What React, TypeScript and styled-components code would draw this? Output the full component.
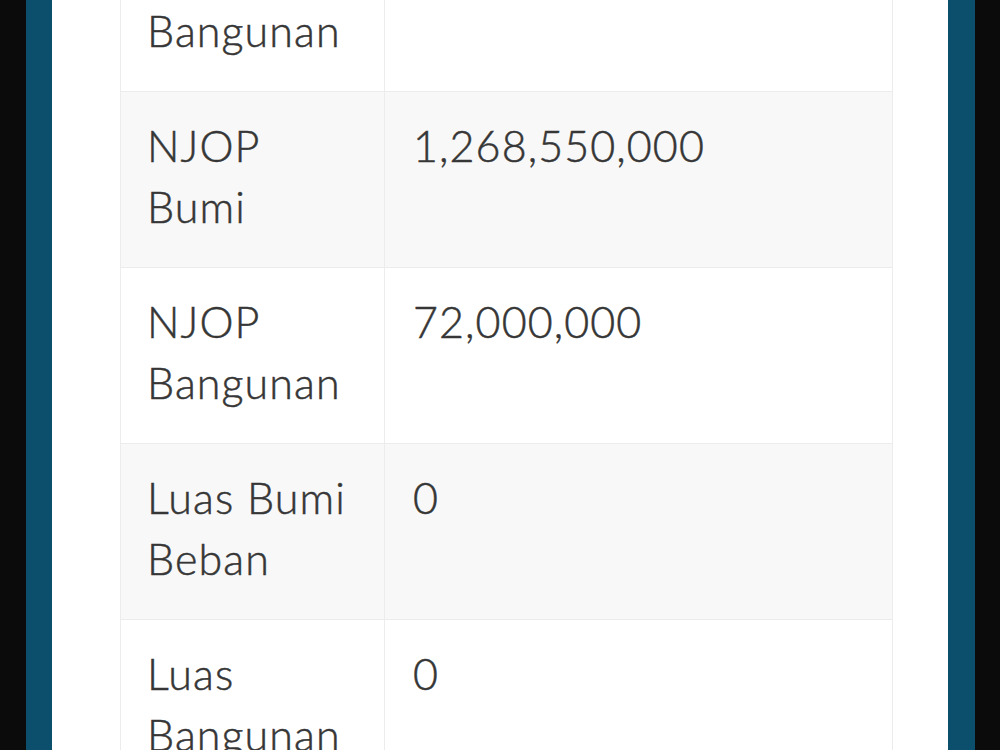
import React from "react";
import styled, { createGlobalStyle } from "styled-components";

const Global = createGlobalStyle`
  html, body { margin: 0; padding: 0; background: #0b0b0b; }
  #root { width: 1000px; height: 750px; }
`;

const Screen = styled.div`
  width: 1000px;
  height: 750px;
  box-sizing: border-box;
  background: #0b0b0b;
  padding: 0 25px 0 26px;
  overflow: hidden;
`;

const Device = styled.div`
  height: 100%;
  box-sizing: border-box;
  border-left: 26px solid #0b4f6d;
  border-right: 27px solid #0b4f6d;
  background: #ffffff;
  padding: 0 55px 0 68px;
  overflow: hidden;
`;

const Table = styled.table`
  width: 100%;
  margin-top: -85px;
  border-collapse: collapse;
  border: 1px solid #ececec;
  font-family: Lato, "Open Sans", sans-serif;
  font-weight: 300;
  font-size: 43px;
  line-height: 61px;
  letter-spacing: 1.1px;
  color: #363636;
  -webkit-text-stroke: 0.5px #363636;
`;

const Row = styled.tr<{ $striped: boolean }>`
  background: ${(p) => (p.$striped ? "#f8f8f8" : "#ffffff")};
  border-top: 1px solid #ececec;
`;

const Label = styled.td`
  width: 210px;
  padding: 23px 27px 30px 26px;
  vertical-align: top;
  border-right: 1px solid #ececec;
`;

const Value = styled.td`
  padding: 23px 27px 30px 28px;
  vertical-align: top;
`;

const rows: [string, string][] = [
  ["Kelas Bangunan", "-"],
  ["NJOP Bumi", "1,268,550,000"],
  ["NJOP Bangunan", "72,000,000"],
  ["Luas Bumi Beban", "0"],
  ["Luas Bangunan", "0"],
];

export default function App() {
  return (
    <>
      <Global />
      <Screen>
        <Device>
          <Table>
            <tbody>
              {rows.map(([k, v], i) => (
                <Row key={k} $striped={i % 2 === 1}>
                  <Label>{k}</Label>
                  <Value>{v}</Value>
                </Row>
              ))}
            </tbody>
          </Table>
        </Device>
      </Screen>
    </>
  );
}
